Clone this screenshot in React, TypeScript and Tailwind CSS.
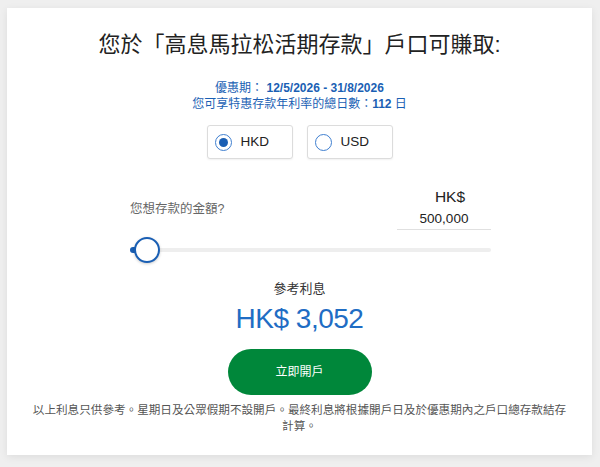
import { useState } from 'react';

const FONT = { fontFamily: '"Liberation Sans", Arial, "Noto Sans CJK TC", sans-serif' };

function Radio({ label, checked, onClick }: { label: string; checked: boolean; onClick: () => void }) {
  return (
    <button onClick={onClick} className="w-[86px] h-[34px] flex items-center gap-[9px] pl-[7px] rounded-[3px] border border-[#dcdcdc] bg-white shadow-[0_1px_2px_rgba(0,0,0,0.06)]">
      <span className="w-[17px] h-[17px] rounded-full border-[1.5px] border-[#3f7fd0] flex items-center justify-center">
        {checked && <span className="w-[9px] h-[9px] rounded-full bg-[#1a5fb4]" />}
      </span>
      <span className="text-[13.5px] text-[#222]">{label}</span>
    </button>
  );
}

export default function App() {
  const [currency, setCurrency] = useState('HKD');
  return (
    <div className="w-[600px] h-[467px] bg-[#efefef] pt-[8px] pl-[7px]" style={FONT}>
      <div className="w-[585px] h-[447px] bg-white shadow-[0_2px_8px_rgba(0,0,0,0.08)] flex flex-col items-center pt-[22px]">
        <h1 className="text-[22px] leading-[30px] text-[#222]">您於「高息馬拉松活期存款」戶口可賺取:</h1>

        <div className="mt-[20px] text-center text-[12px] leading-[16px] text-[#1a5fb4]">
          <p>優惠期： <span className="font-bold">12/5/2026 - 31/8/2026</span></p>
          <p>您可享特惠存款年利率的總日數：<span className="font-bold">112</span> 日</p>
        </div>

        <div className="mt-[13px] flex gap-[14px]">
          <Radio label="HKD" checked={currency === 'HKD'} onClick={() => setCurrency('HKD')} />
          <Radio label="USD" checked={currency === 'USD'} onClick={() => setCurrency('USD')} />
        </div>

        <div className="self-start ml-[123px] w-[361px] mt-[29px]">
          <div className="flex items-center justify-between">
            <span className="text-[12.5px] text-[#666]">您想存款的金額?</span>
            <div className="w-[94px] flex flex-col items-center gap-[4px] border-b border-[#e0e0e0] pb-[1px]">
              <span className="text-[15.5px] leading-[18px] text-[#222] pl-[12px]">HK$</span>
              <span className="text-[13.5px] leading-[18px] text-[#222]">{currency === 'HKD' ? '500,000' : '50,000'}</span>
            </div>
          </div>
          <div className="relative mt-[7px] h-[26px] flex items-center">
            <div className="w-full h-[4px] rounded-full bg-[#eeeeee]" />
            <div className="absolute left-0 w-[8px] h-[6px] rounded-l-full bg-[#1a5fb4]" />
            <div className="absolute left-[4px] w-[26px] h-[26px] rounded-full bg-white border-2 border-[#1a5fb4] shadow-[0_1px_3px_rgba(0,0,0,0.2)]" />
          </div>
        </div>

        <p className="mt-[17px] text-[13px] leading-[18px] text-[#333]">參考利息</p>
        <p className="mt-[4px] text-[28px] leading-[34px] text-[#1f6dc4] tracking-[-0.5px]">HK$ 3,052</p>

        <button className="mt-[13px] w-[144px] h-[46px] rounded-full bg-[#00873a] text-white text-[12px]">立即開戶</button>

        <p className="mt-[7px] w-[560px] text-center text-[11.6px] leading-[16px] text-[#555]">
          以上利息只供參考。星期日及公眾假期不設開戶。最終利息將根據開戶日及於優惠期內之戶口總存款結存<br />計算。
        </p>
      </div>
    </div>
  );
}
